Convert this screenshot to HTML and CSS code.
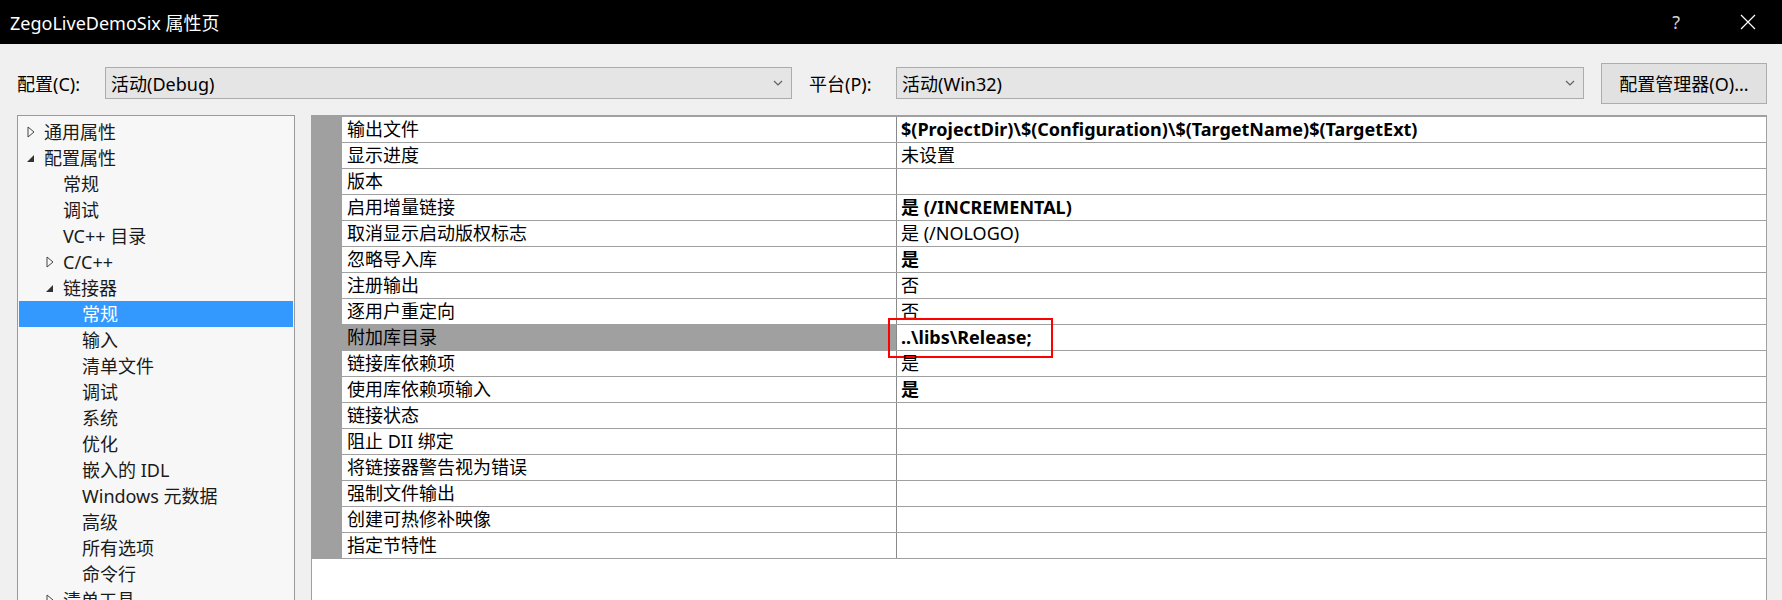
FILE: index.html
```html
<!DOCTYPE html>
<html lang="zh">
<head>
<meta charset="utf-8">
<title>ZegoLiveDemoSix 属性页</title>
<link rel="stylesheet" href="styles.css">
</head>
<body>
<div class="dialog">
  <div class="titlebar">
    <div class="title">ZegoLiveDemoSix 属性页</div>
    <div class="title-btns">
      <span class="help">?</span>
      <svg class="close" width="16" height="16" viewBox="0 0 16 16"><path d="M1 1L15 15M15 1L1 15" stroke="#fff" stroke-width="1.2" fill="none"/></svg>
    </div>
  </div>

  <div class="toolbar">
    <span class="lbl lbl-config">配置(C):</span>
    <div class="combo combo-config"><span>活动(Debug)</span><svg class="chev" width="10" height="6" viewBox="0 0 10 6"><path d="M1 1L5 5L9 1" stroke="#606060" stroke-width="1.2" fill="none"/></svg></div>
    <span class="lbl lbl-platform">平台(P):</span>
    <div class="combo combo-platform"><span>活动(Win32)</span><svg class="chev" width="10" height="6" viewBox="0 0 10 6"><path d="M1 1L5 5L9 1" stroke="#606060" stroke-width="1.2" fill="none"/></svg></div>
    <button class="btn">配置管理器(O)...</button>
  </div>

  <div class="main">
    <div class="tree">
      <div class="node l0"><span class="tog"><svg width="8" height="12" viewBox="0 0 8 12"><path d="M1 1L7 6L1 11Z" fill="none" stroke="#444" stroke-width="1"/></svg></span>通用属性</div>
      <div class="node l0"><span class="tog"><svg width="8" height="12" viewBox="0 0 8 12"><path d="M7 3L7 10L0 10Z" fill="#333"/></svg></span>配置属性</div>
      <div class="node l1"><span class="tog"></span>常规</div>
      <div class="node l1"><span class="tog"></span>调试</div>
      <div class="node l1"><span class="tog"></span>VC++ 目录</div>
      <div class="node l1"><span class="tog"><svg width="8" height="12" viewBox="0 0 8 12"><path d="M1 1L7 6L1 11Z" fill="none" stroke="#444" stroke-width="1"/></svg></span>C/C++</div>
      <div class="node l1"><span class="tog"><svg width="8" height="12" viewBox="0 0 8 12"><path d="M7 3L7 10L0 10Z" fill="#333"/></svg></span>链接器</div>
      <div class="node l2 sel"><span class="tog"></span>常规</div>
      <div class="node l2"><span class="tog"></span>输入</div>
      <div class="node l2"><span class="tog"></span>清单文件</div>
      <div class="node l2"><span class="tog"></span>调试</div>
      <div class="node l2"><span class="tog"></span>系统</div>
      <div class="node l2"><span class="tog"></span>优化</div>
      <div class="node l2"><span class="tog"></span>嵌入的 IDL</div>
      <div class="node l2"><span class="tog"></span>Windows 元数据</div>
      <div class="node l2"><span class="tog"></span>高级</div>
      <div class="node l2"><span class="tog"></span>所有选项</div>
      <div class="node l2"><span class="tog"></span>命令行</div>
      <div class="node l1"><span class="tog"><svg width="8" height="12" viewBox="0 0 8 12"><path d="M1 1L7 6L1 11Z" fill="none" stroke="#444" stroke-width="1"/></svg></span>清单工具</div>
    </div>

    <div class="grid">
      <div class="rows">
        <div class="row"><div class="name">输出文件</div><div class="val b">$(ProjectDir)\$(Configuration)\$(TargetName)$(TargetExt)</div></div>
        <div class="row"><div class="name">显示进度</div><div class="val">未设置</div></div>
        <div class="row"><div class="name">版本</div><div class="val"></div></div>
        <div class="row"><div class="name">启用增量链接</div><div class="val b">是 (/INCREMENTAL)</div></div>
        <div class="row"><div class="name">取消显示启动版权标志</div><div class="val">是 (/NOLOGO)</div></div>
        <div class="row"><div class="name">忽略导入库</div><div class="val b">是</div></div>
        <div class="row"><div class="name">注册输出</div><div class="val">否</div></div>
        <div class="row"><div class="name">逐用户重定向</div><div class="val">否</div></div>
        <div class="row hl"><div class="name">附加库目录</div><div class="val b">..\libs\Release;<span class="mark"></span></div></div>
        <div class="row"><div class="name">链接库依赖项</div><div class="val">是</div></div>
        <div class="row"><div class="name">使用库依赖项输入</div><div class="val b">是</div></div>
        <div class="row"><div class="name">链接状态</div><div class="val"></div></div>
        <div class="row"><div class="name">阻止 DII 绑定</div><div class="val"></div></div>
        <div class="row"><div class="name">将链接器警告视为错误</div><div class="val"></div></div>
        <div class="row"><div class="name">强制文件输出</div><div class="val"></div></div>
        <div class="row"><div class="name">创建可热修补映像</div><div class="val"></div></div>
        <div class="row"><div class="name">指定节特性</div><div class="val"></div></div>
      </div>
    </div>
  </div>
</div>
</body>
</html>
```

FILE: styles.css
```css
* { box-sizing: border-box; }
html, body {
  margin: 0;
  padding: 0;
  width: 1782px;
  height: 600px;
  overflow: hidden;
  background: #f0f0f0;
  font-family: "Noto Sans", "Noto Sans CJK SC", sans-serif;
  font-size: 18px;
  color: #000;
}
.dialog { display: flex; flex-direction: column; height: 600px; }

.titlebar {
  height: 44px;
  background: #000;
  color: #fff;
  display: flex;
  align-items: center;
  justify-content: space-between;
  padding: 0 26px 0 10px;
  flex: none;
}
.title { font-size: 18px; }
.title-btns { display: flex; align-items: center; gap: 60px; }
.help { font-size: 18px; color: #d0d0d0; }
.close { display: block; }

.toolbar {
  display: flex;
  align-items: center;
  height: 60px;
  padding: 19px 15px 1px 17px;
  flex: none;
}
.lbl { font-size: 18px; white-space: nowrap; }
.lbl-config { width: 88px; }
.lbl-platform { margin-left: 17px; width: 87px; }
.combo {
  height: 32px;
  background: #e5e5e5;
  border: 1px solid #acacac;
  display: flex;
  align-items: center;
  justify-content: space-between;
  padding: 0 8px 0 5px;
  font-size: 18px;
  white-space: nowrap;
}
.combo-config { width: 687px; }
.combo-platform { width: 688px; }
.chev { display: block; }
.btn {
  margin-left: 17px;
  width: 166px;
  height: 41px;
  background: #e1e1e1;
  border: 1px solid #adadad;
  font-family: inherit;
  font-size: 18px;
  color: #000;
  padding: 0;
  white-space: nowrap;
}

.main {
  display: flex;
  gap: 16px;
  padding: 11px 15px 0 17px;
  flex: 1;
  min-height: 0;
}
.tree {
  width: 278px;
  background: #f7f7f7;
  border: 1px solid #9a9a9a;
  border-bottom: none;
  padding: 3px 1px 0 1px;
  overflow: hidden;
}
.node {
  height: 26px;
  line-height: 26px;
  white-space: nowrap;
  display: flex;
  align-items: center;
  font-size: 18px;
  color: #1a1a1a;
}
.node.l0 { padding-left: 8px; }
.node.l1 { padding-left: 27px; }
.node.l2 { padding-left: 46px; }
.node.sel { background: #3399ff; color: #fff; }
.tog { width: 17px; flex: none; display: flex; align-items: center; }
.tog svg { display: block; }

.grid {
  flex: 1;
  background: #fff;
  border: 1px solid #a0a0a0;
  border-top: 2px solid #a0a0a0;
  border-bottom: none;
  overflow: hidden;
}
.rows {
  border-left: 30px solid #a0a0a0;
}
.row {
  display: flex;
  height: 26px;
  border-bottom: 1px solid #a0a0a0;
  font-size: 18px;
}
.name {
  width: 555px;
  flex: none;
  padding-left: 5px;
  border-right: 1px solid #8a8a8a;
  line-height: 25px;
  white-space: nowrap;
}
.val {
  flex: 1;
  padding-left: 4px;
  line-height: 25px;
  white-space: nowrap;
  position: relative;
}
.val.b { font-weight: 700; }
.row.hl .name { background: #a0a0a0; }
.mark {
  position: absolute;
  left: -9px;
  top: -7px;
  width: 165px;
  height: 40px;
  border: 2px solid #ff0000;
}
```
